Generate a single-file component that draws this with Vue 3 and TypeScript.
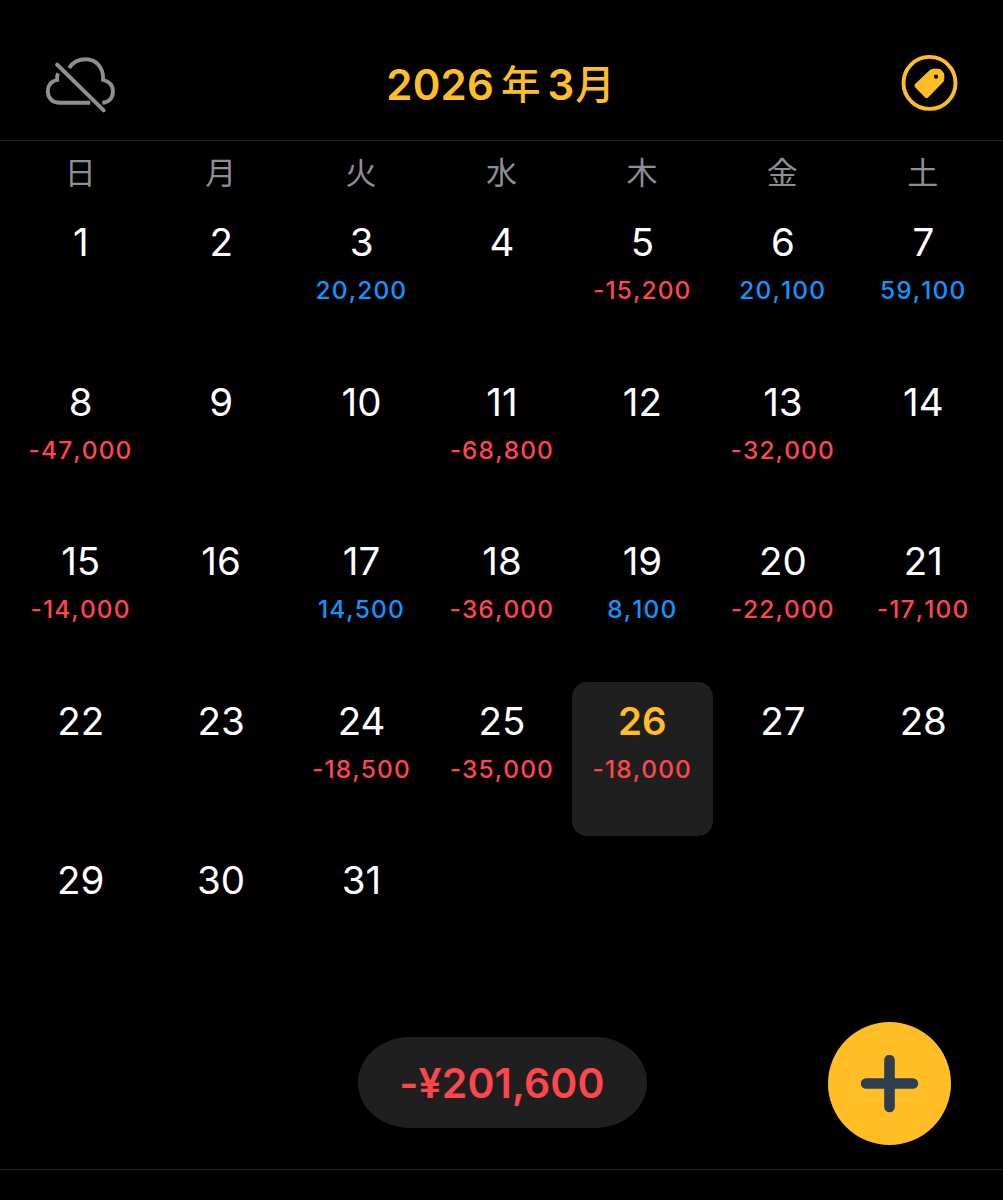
<script setup lang="ts">
interface Day {
  date: number
  amount?: number
}

const weekdays: string[] = ['日', '月', '火', '水', '木', '金', '土']

const amounts: Record<number, number> = {
  3: 20200,
  5: -15200,
  6: 20100,
  7: 59100,
  8: -47000,
  11: -68800,
  13: -32000,
  15: -14000,
  17: 14500,
  18: -36000,
  19: 8100,
  20: -22000,
  21: -17100,
  24: -18500,
  25: -35000,
  26: -18000,
}

const today = 26
const days: Day[] = Array.from({ length: 31 }, (_, i) => ({
  date: i + 1,
  amount: amounts[i + 1],
}))

const format = (n: number): string => n.toLocaleString('en-US')
</script>

<template>
  <div class="screen">
    <header class="header">
      <svg class="cloud" width="76" height="62" viewBox="42.3 52.8 76 62" fill="none" stroke="#8e8e93" stroke-width="3.9">
        <path d="M58.3 73Q57 76 57.4 79.7C51.5 81 48.1 85.2 48.1 91C48.1 98 53 102.6 60 102.6H90.5" />
        <path d="M69.5 67.8C73 62 79 59 86 59C97 59 104.2 68 103.4 79.6C109.8 81.2 113.2 85.4 113.2 91C113.2 97.8 109.2 102.2 102.6 102.6" />
        <path d="M57.3 64.3L104 110.2" stroke-linecap="round" />
      </svg>
      <h1 class="title"><span class="year">2026</span><span class="kanji nen">年</span><span class="month">3</span><span class="kanji">月</span></h1>
      <svg class="tag" width="58" height="58" viewBox="901 54.1 58 58">
        <circle cx="929.5" cy="83" r="26" fill="none" stroke="#ffbe26" stroke-width="3.9" />
        <path
          fill="#ffbe26"
          fill-rule="evenodd"
          d="M915.1 84.1L929.6 70.4Q931.3 68.8 933.6 68.8H938.3Q940 68.8 941.2 70L943 71.8Q944.3 73.1 944.3 75V78.8Q944.3 81 942.7 82.6L928.1 97.7Q926.6 99.2 925.1 97.7L915.1 87.4Q913.6 85.7 915.1 84.1ZM936 74.6a2.1 2.1 0 1 0 .01 0Z"
        />
      </svg>
    </header>

    <div class="weekdays">
      <span v-for="w in weekdays" :key="w">{{ w }}</span>
    </div>

    <main class="grid">
      <div v-for="d in days" :key="d.date" class="cell" :class="{ today: d.date === today }">
        <span class="date">{{ d.date }}</span>
        <span v-if="d.amount !== undefined" class="amount" :class="d.amount < 0 ? 'minus' : 'plus'">{{ format(d.amount) }}</span>
      </div>
    </main>

    <footer class="footer">
      <div class="total">-¥201,600</div>
      <button class="add" type="button" aria-label="追加">
        <svg width="58" height="58" viewBox="0.5 0.5 58 58" stroke="#2c3e50" stroke-width="10.6" stroke-linecap="round">
          <path d="M5.6 29H52.4M29 5.6V52.4" />
        </svg>
      </button>
    </footer>
  </div>
</template>

<style>
body {
  background: #000;
}
</style>

<style scoped>
.screen {
  width: 1003px;
  height: 1200px;
  box-sizing: border-box;
  background: #000;
  color: #fff;
  font-family: Inter, 'Noto Sans CJK JP', sans-serif;
  display: flex;
  flex-direction: column;
  overflow: hidden;
}

.header {
  display: grid;
  grid-template-columns: 1fr auto 1fr;
  align-items: start;
  height: 141px;
  box-sizing: border-box;
  padding: 53px 44px 0 42px;
  border-bottom: 1px solid #222224;
}

.cloud {
  display: block;
}

.tag {
  display: block;
  justify-self: end;
  margin-top: 1px;
}

.title {
  display: flex;
  margin: 0;
  font-size: 42px;
  font-weight: 600;
  line-height: 64px;
  color: #ffbe26;
}

.year {
  letter-spacing: 0.2px;
}

.kanji {
  font-family: 'Noto Sans CJK JP', sans-serif;
  font-size: 39.5px;
  font-weight: 500;
  line-height: 58px;
}

.nen {
  margin: 0 7px 0 7px;
}

.month {
  margin-right: 1px;
}

.weekdays {
  display: grid;
  grid-template-columns: repeat(7, 1fr);
  padding: 0 10px;
  height: 62px;
  line-height: 60px;
  text-align: center;
  font-family: 'Noto Sans CJK JP', sans-serif;
  font-size: 31px;
  color: #8e8e93;
}

.grid {
  display: grid;
  grid-template-columns: repeat(7, 1fr);
  grid-auto-rows: 154px;
  row-gap: 5.6px;
  padding: 0 9.5px 0 10.5px;
}

.cell {
  display: flex;
  flex-direction: column;
  align-items: center;
  border-radius: 15px;
  padding-top: 9px;
}

.date {
  font-size: 38.5px;
  line-height: 60px;
}

.amount {
  font-size: 24.5px;
  font-weight: 450;
  line-height: 37.5px;
  letter-spacing: 1.1px;
  margin-right: 0.3px;
  font-kerning: none;
}

.plus {
  color: #1593fb;
}

.minus {
  color: #ff464d;
}

.today {
  background: #1f1f1f;
}

.today .date {
  color: #ffbe26;
  font-weight: 600;
}

.footer {
  margin-top: auto;
  display: grid;
  grid-template-columns: 1fr auto 1fr;
  align-items: center;
  height: 148px;
  margin-bottom: 30px;
  padding: 0 52px 24px 53px;
  box-sizing: border-box;
  border-bottom: 1px solid #29292a;
}

.total {
  grid-column: 2;
  width: 289px;
  height: 91px;
  margin-bottom: 2px;
  border-radius: 52px / 45.5px;
  background: #1f1f1f;
  color: #ff464d;
  font-size: 41px;
  font-weight: 600;
  line-height: 92px;
  letter-spacing: 0.1px;
  text-align: center;
}

.add {
  justify-self: end;
  width: 123px;
  height: 123px;
  padding: 0;
  border: 0;
  border-radius: 50%;
  background: #ffbe26;
  display: flex;
  align-items: center;
  justify-content: center;
}
</style>
